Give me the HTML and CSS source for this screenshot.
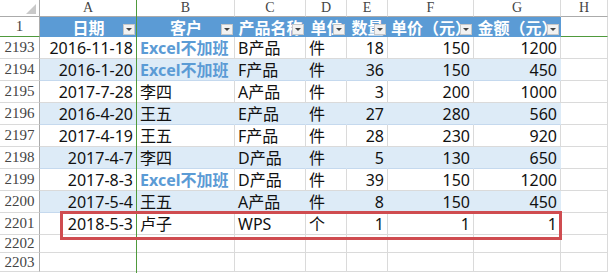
FILE: index.html
```html
<!DOCTYPE html>
<html lang="zh">
<head>
<meta charset="utf-8">
<link rel="stylesheet" href="styles.css">
</head>
<body>
<div class="wrap">
  <div class="sheet">
    <div class="hd corner"><span class="tri"></span></div>
    <div class="hd col">A</div><div class="hd col">B</div><div class="hd col">C</div><div class="hd col">D</div><div class="hd col">E</div><div class="hd col">F</div><div class="hd col">G</div><div class="hd col last">H</div>

    <div class="rh frz">1</div>
    <div class="th">日期<i class="btn"></i></div>
    <div class="th">客户<i class="btn"></i></div>
    <div class="th">产品名称<i class="btn"></i></div>
    <div class="th">单位<i class="btn"></i></div>
    <div class="th">数量<i class="btn"></i></div>
    <div class="th">单价（元）<i class="btn"></i></div>
    <div class="th">金额（元）<i class="btn"></i></div>
    <div class="c frz"></div>

    <div class="rh">2193</div>
    <div class="c r">2016-11-18</div><div class="c xl">Excel不加班</div><div class="c">B产品</div><div class="c">件</div><div class="c r">18</div><div class="c r">150</div><div class="c r">1200</div><div class="c"></div>

    <div class="rh">2194</div>
    <div class="c r b">2016-1-20</div><div class="c xl b">Excel不加班</div><div class="c b">F产品</div><div class="c b">件</div><div class="c r b">36</div><div class="c r b">150</div><div class="c r b">450</div><div class="c"></div>

    <div class="rh">2195</div>
    <div class="c r">2017-7-28</div><div class="c">李四</div><div class="c">A产品</div><div class="c">件</div><div class="c r">3</div><div class="c r">200</div><div class="c r">1000</div><div class="c"></div>

    <div class="rh">2196</div>
    <div class="c r b">2016-4-20</div><div class="c b">王五</div><div class="c b">E产品</div><div class="c b">件</div><div class="c r b">27</div><div class="c r b">280</div><div class="c r b">560</div><div class="c"></div>

    <div class="rh">2197</div>
    <div class="c r">2017-4-19</div><div class="c">王五</div><div class="c">F产品</div><div class="c">件</div><div class="c r">28</div><div class="c r">230</div><div class="c r">920</div><div class="c"></div>

    <div class="rh">2198</div>
    <div class="c r b">2017-4-7</div><div class="c b">李四</div><div class="c b">D产品</div><div class="c b">件</div><div class="c r b">5</div><div class="c r b">130</div><div class="c r b">650</div><div class="c"></div>

    <div class="rh">2199</div>
    <div class="c r">2017-8-3</div><div class="c xl">Excel不加班</div><div class="c">D产品</div><div class="c">件</div><div class="c r">39</div><div class="c r">150</div><div class="c r">1200</div><div class="c"></div>

    <div class="rh">2200</div>
    <div class="c r b">2017-5-4</div><div class="c b">王五</div><div class="c b">A产品</div><div class="c b">件</div><div class="c r b">8</div><div class="c r b">150</div><div class="c r b">450</div><div class="c"></div>

    <div class="rh">2201</div>
    <div class="c r">2018-5-3</div><div class="c">卢子</div><div class="c">WPS</div><div class="c">个</div><div class="c r">1</div><div class="c r">1</div><div class="c r">1</div><div class="c"></div>

    <div class="rh">2202</div>
    <div class="c"></div><div class="c"></div><div class="c"></div><div class="c"></div><div class="c"></div><div class="c"></div><div class="c"></div><div class="c"></div>

    <div class="rh">2203</div>
    <div class="c"></div><div class="c"></div><div class="c"></div><div class="c"></div><div class="c"></div><div class="c"></div><div class="c"></div><div class="c"></div>
  </div>
  <div class="freeze-v"></div>
  <div class="mark"></div>
</div>
</body>
</html>
```

FILE: styles.css
```css
html, body {
  margin: 0;
  padding: 0;
  background: #fff;
  overflow: hidden;
}

.wrap {
  position: relative;
  width: 608px;
  height: 273px;
}

.sheet {
  display: grid;
  grid-template-columns: 40px 97px 98px 71px 41px 41px 86px 87px 47px;
  grid-template-rows: 17px 20px repeat(8, 22px) 22px 18px 19px;
  font-family: "Noto Sans", "Noto Sans CJK SC", sans-serif;
  font-size: 16px;
  color: #111;
}

.sheet > div {
  box-sizing: border-box;
  white-space: nowrap;
  overflow: hidden;
  position: relative;
  line-height: 1;
}

.hd {
  font-family: "Liberation Serif", "Noto Sans CJK SC", serif;
  font-size: 14px;
  color: #444;
  background: #fff;
  border-bottom: 1px solid #ababab;
  border-right: 1px solid #dadada;
  display: flex;
  align-items: center;
  justify-content: center;
}

.corner {
  border-right: 1px solid #ababab;
}

.tri {
  position: absolute;
  right: 3px;
  bottom: 2px;
  width: 0;
  height: 0;
  border-left: 10px solid transparent;
  border-bottom: 10px solid #c9c9c9;
}

.rh {
  font-family: "Liberation Serif", serif;
  font-size: 15px;
  color: #444;
  border-right: 1px solid #ababab;
  border-bottom: 1px solid #dadada;
  display: flex;
  align-items: center;
  justify-content: center;
}

.frz {
  border-bottom: 1px solid #4f9a3c !important;
}

.sheet > .th {
  background: #5b9bd5;
  color: #fff;
  font-family: "Noto Sans CJK SC", sans-serif;
  font-weight: bold;
  font-size: 16px;
  display: flex;
  align-items: center;
  justify-content: center;
  border-bottom: 1px solid #5b9bd5;
  overflow: visible;
}

.btn {
  position: absolute;
  right: 2px;
  bottom: 1px;
  width: 12px;
  height: 11px;
  box-sizing: border-box;
  background: #f2f2f2;
  border: 1px solid #c8c8c8;
}

.btn::after {
  content: "";
  position: absolute;
  left: 2px;
  top: 3px;
  border-left: 3px solid transparent;
  border-right: 3px solid transparent;
  border-top: 3px solid #444;
}

.c {
  border-right: 1px solid #dadada;
  border-bottom: 1px solid #dadada;
  display: flex;
  align-items: center;
  padding: 1px 3px 0 3px;
}

.c.r {
  justify-content: flex-end;
}

.c.b {
  background: #ddebf7;
  border-right-color: #ddebf7;
  border-bottom-color: #c5d9ee;
}

.xl {
  color: #5b9bd5;
  font-weight: bold;
}

.freeze-v {
  position: absolute;
  left: 136px;
  top: 0;
  width: 1px;
  height: 273px;
  background: #4f9a3c;
}

.mark {
  position: absolute;
  left: 60px;
  top: 211px;
  width: 502px;
  height: 29px;
  box-sizing: border-box;
  border: 3px solid #cf4c50;
}
```
